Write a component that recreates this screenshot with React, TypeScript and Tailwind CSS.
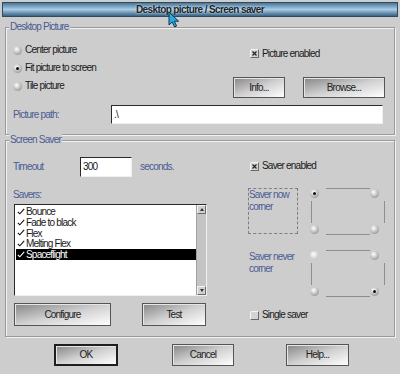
import React from "react";

const font = "font-['Liberation_Sans',sans-serif] tracking-[-0.8px]";

function Radio({ on = false, dim = false }: { on?: boolean; dim?: boolean }) {
  return (
    <span
      className={`flex h-[9px] w-[9px] shrink-0 items-center justify-center rounded-full ${
        dim
          ? "bg-[radial-gradient(circle_at_40%_35%,#ffffff_0%,#dedede_40%,#b4b4b4_100%)]"
          : "bg-[radial-gradient(circle_at_40%_35%,#ffffff_0%,#d2d2d2_35%,#7c7c7c_100%)]"
      }`}
    >
      {on ? <span className="h-[3px] w-[3px] rounded-full bg-[#111]" /> : null}
    </span>
  );
}

function Check({ on }: { on: boolean }) {
  return (
    <svg width="9" height="9" viewBox="0 0 9 9" className="shrink-0">
      <rect x="0.5" y="0.5" width="8" height="8" fill="#d4d4d4" stroke="#6a6a6a" />
      <path d="M0.5 8.5V0.5H8.5" fill="none" stroke="#f4f4f4" />
      {on ? <path d="M2.5 2.5L6.5 6.5M6.5 2.5L2.5 6.5" stroke="#222" strokeWidth="1.2" /> : null}
    </svg>
  );
}

function Button({ label, w, dflt = false }: { label: string; w: string; dflt?: boolean }) {
  return (
    <div
      className={`flex h-full shrink-0 items-center justify-center bg-gradient-to-br from-[#868686] via-[#d0d0d0] to-[#ffffff] text-[#222] shadow-[inset_1px_1px_0_#e6e6e6] ${w} ${
        dflt ? "border-2 border-[#1e1e1e]" : "border border-[#555]"
      }`}
    >
      {label}
    </div>
  );
}

function Frame({ title, h, mt, children }: { title: string; h: string; mt: string; children: React.ReactNode }) {
  return (
    <div
      className={`relative mx-[5px] shrink-0 border border-[#9a9a9a] shadow-[inset_1px_1px_0_#f2f2f2,1px_1px_0_#f2f2f2] ${h} ${mt}`}
    >
      <span className="absolute -top-[7px] left-[3px] bg-[#cdcdcd] px-[1px] leading-[12px] text-[#4a5c92]">{title}</span>
      {children}
    </div>
  );
}

function Corner({ on, dimTL = false }: { on: "tl" | "br"; dimTL?: boolean }) {
  return (
    <div className="relative h-[49px] w-[76px]">
      <span className="absolute left-[16px] top-0 h-px w-[44px] bg-[#8e8e8e]" />
      <span className="absolute bottom-[2px] left-[16px] h-px w-[44px] bg-[#8e8e8e]" />
      <span className="absolute left-[1px] top-[13px] h-[22px] w-px bg-[#8e8e8e]" />
      <span className="absolute right-px top-[13px] h-[22px] w-px bg-[#8e8e8e]" />
      <span className="absolute left-0 top-[1px]">
        <Radio on={on === "tl"} dim={dimTL} />
      </span>
      <span className="absolute left-[60px] top-[1px]">
        <Radio />
      </span>
      <span className="absolute left-0 top-[37px]">
        <Radio />
      </span>
      <span className="absolute left-[60px] top-[37px]">
        <Radio on={on === "br"} />
      </span>
    </div>
  );
}

function Tick({ light }: { light?: boolean }) {
  return (
    <svg width="8" height="7" viewBox="0 0 8 7" className="mr-[1px] shrink-0">
      <path d="M0.8 3.8L2.8 5.8L7.2 0.8" fill="none" stroke={light ? "#fff" : "#111"} strokeWidth="1.1" />
    </svg>
  );
}

const savers = ["Bounce", "Fade to black", "Flex", "Melting Flex", "Spaceflight"];

const inset =
  "border border-b-[#f0f0f0] border-l-[#2a2a2a] border-r-[#f0f0f0] border-t-[#2a2a2a] bg-white";

export default function App() {
  return (
    <div
      className={`relative flex h-[374px] w-[400px] flex-col overflow-hidden bg-[#cdcdcd] text-[10px] leading-[12px] text-[#1a1a1a] ${font}`}
    >
      <div className="mx-[2px] mt-[2px] flex h-[15px] shrink-0 items-center justify-center border border-[#2c4a62] bg-gradient-to-b from-[#4c7696] via-[#a9cde6] to-[#3a6282] font-bold tracking-[-0.6px] text-[#1c242a] [text-shadow:0_0_2px_#e8f0f4]">
        Desktop picture / Screen saver
      </div>

      <Frame title="Desktop Picture" h="h-[108px]" mt="mt-[10px]">
        <div className="flex pt-[13px]">
          <div className="flex w-[227px] shrink-0 flex-col pl-[7px]">
            {[
              ["Center picture", false],
              ["Fit picture to screen", true],
              ["Tile picture", false],
            ].map(([t, on]) => (
              <div key={t as string} className="flex h-[18px] shrink-0 items-center gap-[3px]">
                <Radio on={on as boolean} />
                <span>{t}</span>
              </div>
            ))}
          </div>
          <div className="flex flex-col">
            <div className="ml-[17px] mt-[8px] flex h-[9px] shrink-0 items-center gap-[3px]">
              <Check on />
              <span>Picture enabled</span>
            </div>
            <div className="mt-[19px] flex h-[21px] shrink-0 gap-[18px]">
              <Button label="Info..." w="w-[52px]" />
              <Button label="Browse..." w="w-[82px]" />
            </div>
          </div>
        </div>
        <div className="mt-[7px] flex h-[19px] items-center">
          <span className="w-[105px] shrink-0 pl-[7px] text-[#4a5c92]">Picture path:</span>
          <div className={`flex h-[19px] w-[272px] shrink-0 items-center pl-[2px] ${inset}`}>.\</div>
        </div>
      </Frame>

      <Frame title="Screen Saver" h="h-[197px]" mt="mt-[5px]">
        <div className="flex">
          <div className="flex w-[242px] shrink-0 flex-col pt-[16px]">
            <div className="flex h-[20px] shrink-0 items-center">
              <span className="w-[74px] shrink-0 pl-[7px] text-[#4a5c92]">Timeout</span>
              <div className={`flex h-[20px] w-[52px] shrink-0 items-center pl-[2px] ${inset}`}>300</div>
              <span className="ml-[8px] text-[#4a5c92]">seconds.</span>
            </div>
            <span className="mt-[12px] pl-[7px] text-[#4a5c92]">Savers:</span>
            <div className={`ml-[8px] mt-[3px] flex h-[92px] w-[193px] shrink-0 ${inset}`}>
              <div className="flex flex-1 flex-col pl-[1px] pt-[1px]">
                {savers.map((s, i) => {
                  const sel = i === savers.length - 1;
                  return (
                    <div
                      key={s}
                      className={`flex h-[10.8px] shrink-0 items-center pl-[1px] leading-[11px] ${sel ? "bg-black text-white" : ""}`}
                    >
                      <Tick light={sel} />
                      {s}
                    </div>
                  );
                })}
              </div>
              <div className="flex w-[10px] flex-col justify-between border-l border-[#a0a0a0] bg-[#c4c4c4]">
                <div className="flex h-[9px] items-center justify-center border border-b-[#6a6a6a] border-l-[#f4f4f4] border-r-[#6a6a6a] border-t-[#f4f4f4] bg-[#d0d0d0]">
                  <span className="h-0 w-0 border-x-[2px] border-b-[3px] border-x-transparent border-b-[#333]" />
                </div>
                <div className="flex h-[9px] items-center justify-center border border-b-[#6a6a6a] border-l-[#f4f4f4] border-r-[#6a6a6a] border-t-[#f4f4f4] bg-[#d0d0d0]">
                  <span className="h-0 w-0 border-x-[2px] border-t-[3px] border-x-transparent border-t-[#333]" />
                </div>
              </div>
            </div>
            <div className="mt-[7px] flex h-[23px] shrink-0">
              <div className="ml-[8px] h-full">
                <Button label="Configure" w="w-[97px]" />
              </div>
              <div className="ml-[31px] h-full">
                <Button label="Test" w="w-[64px]" />
              </div>
            </div>
          </div>

          <div className="flex flex-col pt-[20px]">
            <div className="ml-[2px] flex h-[10px] shrink-0 items-center gap-[3px]">
              <Check on />
              <span>Saver enabled</span>
            </div>
            <div className="mt-[17px] flex shrink-0">
              <div className="h-[46px] w-[50px] shrink-0 border border-dashed border-[#7e7e7e] leading-[12px] text-[#4a5c92]">
                Saver now
                <br />
                corner
              </div>
              <div className="ml-[12px]">
                <Corner on="tl" />
              </div>
            </div>
            <div className="mt-[13px] flex shrink-0">
              <div className="w-[50px] shrink-0 pl-[1px] pt-[1px] leading-[12px] text-[#4a5c92]">
                Saver never
                <br />
                corner
              </div>
              <div className="ml-[12px]">
                <Corner on="br" dimTL />
              </div>
            </div>
            <div className="ml-[2px] mt-[11px] flex h-[10px] shrink-0 items-center gap-[3px]">
              <Check on={false} />
              <span>Single saver</span>
            </div>
          </div>
        </div>
      </Frame>

      <div className="mt-[7px] flex h-[22px] shrink-0 pl-[54px]">
        <Button label="OK" w="w-[64px]" dflt />
        <div className="ml-[54px] h-full">
          <Button label="Cancel" w="w-[62px]" />
        </div>
        <div className="ml-[52px] h-full">
          <Button label="Help..." w="w-[63px]" />
        </div>
      </div>

      <svg width="12" height="17" viewBox="0 0 12 17" className="absolute left-[168px] top-[11px]">
        <path d="M1 1V14L4.2 11L6.6 16L8.6 15L6.3 10.2H10.6Z" fill="#2aa8e0" stroke="#0c3850" strokeWidth="1" />
      </svg>
    </div>
  );
}
